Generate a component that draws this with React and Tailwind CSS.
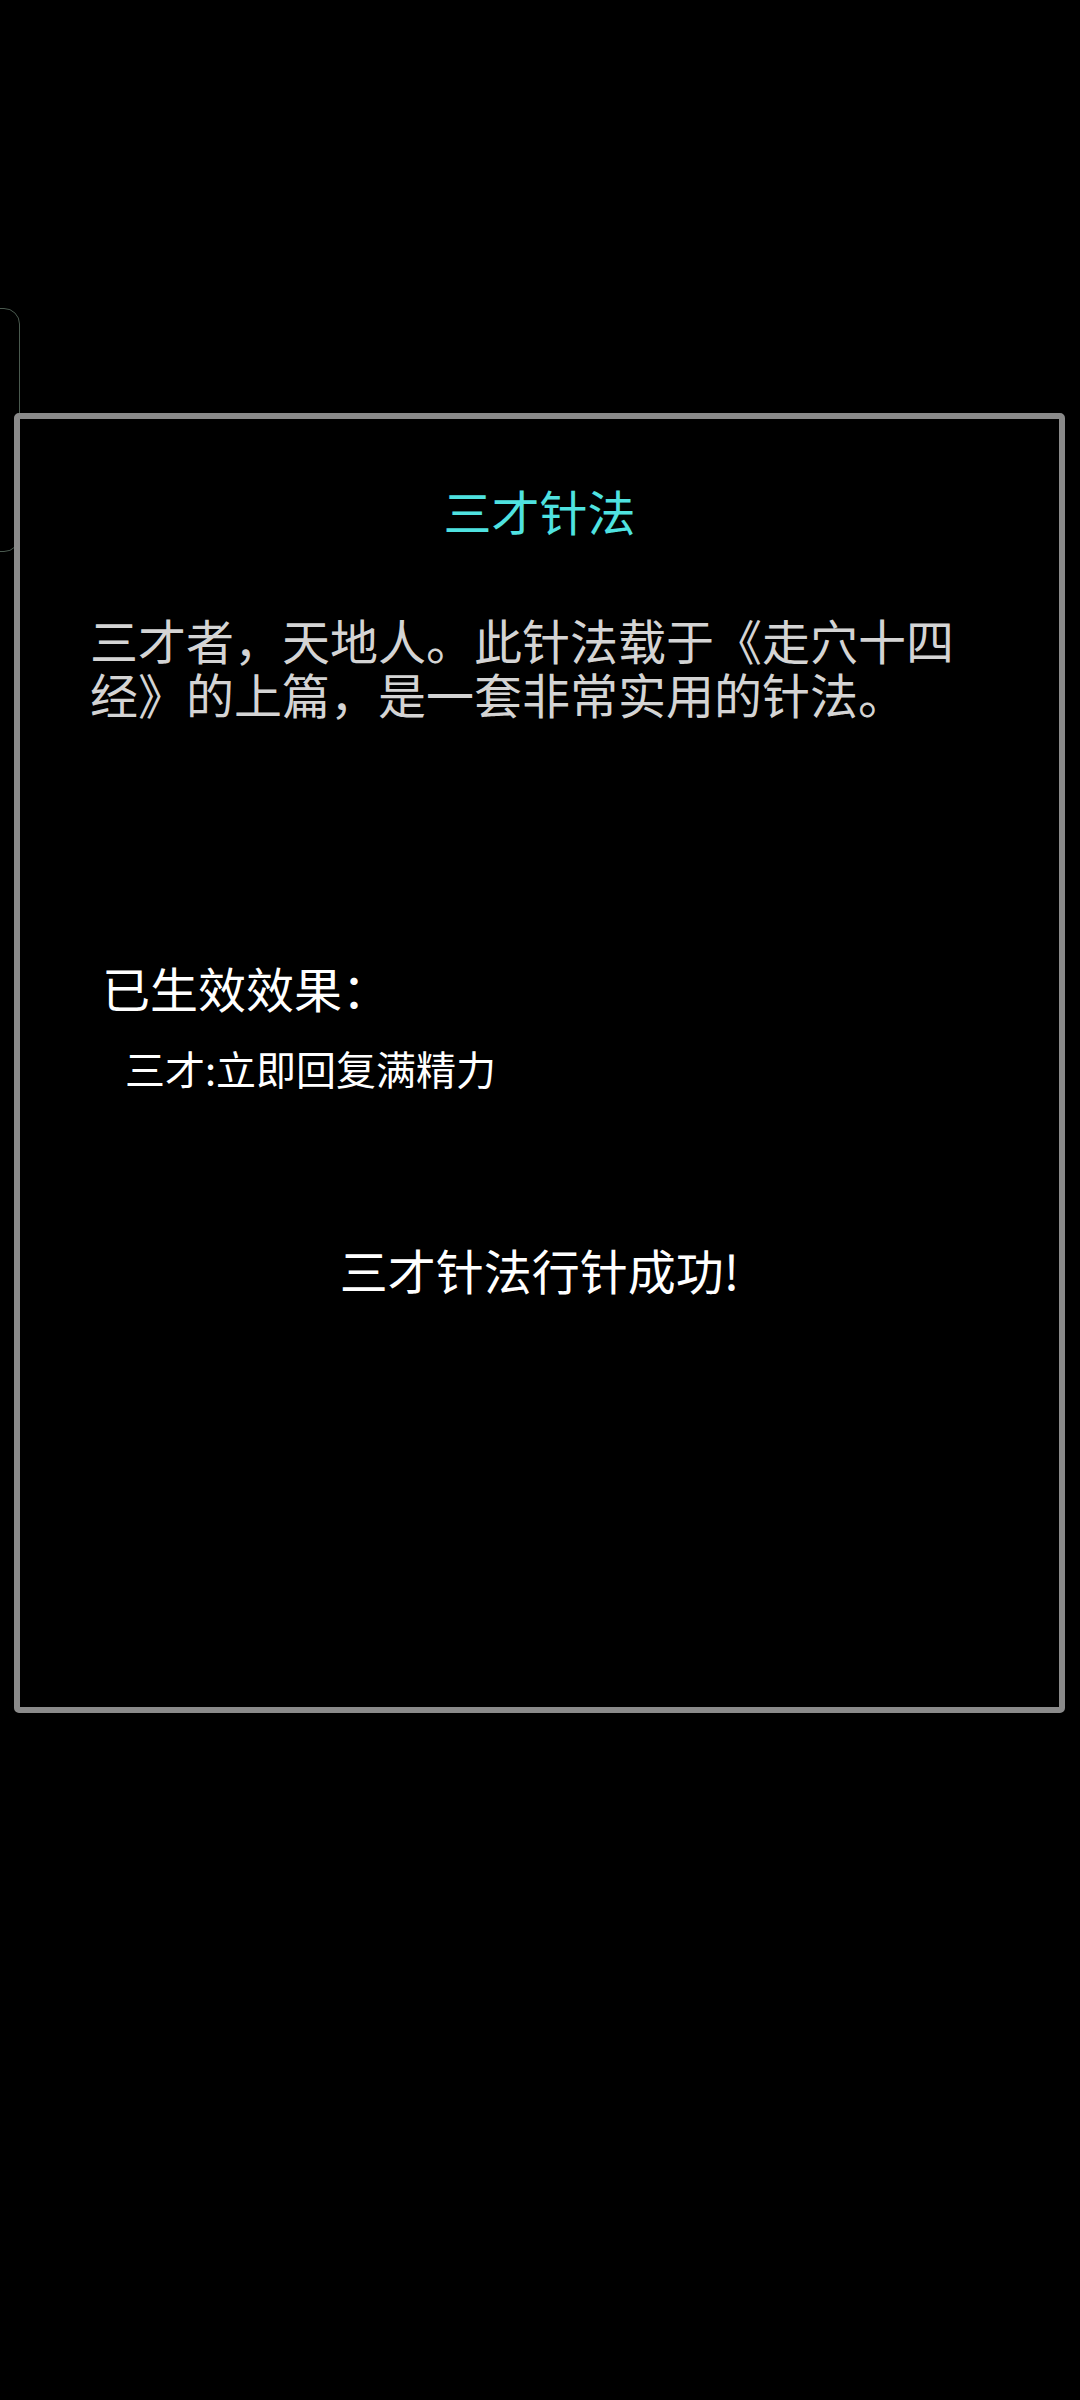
import React from 'react';

const cjk = { fontFamily: '"Noto Sans CJK SC", "Noto Sans", sans-serif' };

export default function App() {
    return (
        <div className="relative w-[1080px] h-[2400px] bg-black overflow-hidden" style={cjk}>
            {/* faint panel behind, mostly off screen */}
            <div className="absolute left-[-30px] top-[308px] w-[50px] h-[244px] rounded-[16px] border border-[#4a5a4f]" />

            {/* Dialog */}
            <div className="relative ml-[14px] mt-[413px] w-[1051px] h-[1300px] border-[6px] border-[#8a8a8a] rounded-[5px] bg-black flex flex-col">
                <h2 className="pt-[60px] text-center text-[48px] leading-[62px] text-[#4fe2e0]">
                    三才针法
                </h2>

                <p className="mt-[71px] px-[70px] text-[48px] leading-[54px] text-[#d4d4d4]">
                    三才者，天地人。此针法载于《走穴十四经》的上篇，是一套非常实用的针法。
                </p>

                <div className="mt-[237px] pl-[82px] text-[48px] leading-[60px] text-white">
                    已生效效果：
                </div>
                <div className="mt-[26px] pl-[105px] text-[40px] leading-[50px] text-white">
                    三才:立即回复满精力
                </div>

                <div className="mt-[146px] text-center text-[48px] leading-[60px] text-white">
                    三才针法行针成功!
                </div>
            </div>
        </div>
    );
}
